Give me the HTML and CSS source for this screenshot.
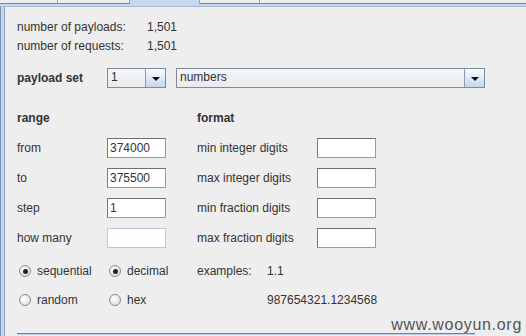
FILE: index.html
```html
<!DOCTYPE html>
<html lang="en">
<head>
    <meta charset="UTF-8">
    <title>Payloads - numbers</title>
    <link rel="stylesheet" href="styles.css">
</head>
<body>

<div class="tabs">
    <span class="tab tab-a"></span>
    <span class="tab tab-b"></span>
    <span class="tab tab-c selected"></span>
    <span class="tab tab-d"></span>
    <span class="tab tab-rest"></span>
</div>
<div class="band"></div>

<div class="panel">
    <div class="stats">
        <div class="stat"><span class="stat-label">number of payloads:</span><span>1,501</span></div>
        <div class="stat"><span class="stat-label">number of requests:</span><span>1,501</span></div>
    </div>

    <div class="payload-set">
        <span class="bold set-label">payload set</span>
        <div class="combo combo-small">
            <span class="combo-value">1</span>
            <span class="combo-btn"><span class="arrow"></span></span>
        </div>
        <div class="combo combo-wide">
            <span class="combo-value">numbers</span>
            <span class="combo-btn"><span class="arrow"></span></span>
        </div>
    </div>

    <div class="options">
        <span class="bold">range</span>
        <span></span>
        <span></span>
        <span class="bold">format</span>
        <span></span>

        <span>from</span>
        <input class="field" type="text" value="374000">
        <span></span>
        <span>min integer digits</span>
        <input class="field" type="text">

        <span>to</span>
        <input class="field" type="text" value="375500">
        <span></span>
        <span>max integer digits</span>
        <input class="field" type="text">

        <span>step</span>
        <input class="field" type="text" value="1">
        <span></span>
        <span>min fraction digits</span>
        <input class="field" type="text">

        <span>how many</span>
        <input class="field disabled" type="text" disabled>
        <span></span>
        <span>max fraction digits</span>
        <input class="field" type="text">
    </div>

    <div class="radios">
        <label class="radio"><span class="dot on"></span>sequential</label>
        <label class="radio"><span class="dot on"></span>decimal</label>
        <span>examples:</span>
        <span>1.1</span>

        <label class="radio"><span class="dot"></span>random</label>
        <label class="radio"><span class="dot"></span>hex</label>
        <span></span>
        <span>987654321.1234568</span>
    </div>

    <div class="bottom-line"></div>
</div>

<div class="watermark">www.wooyun.org</div>

</body>
</html>
```

FILE: styles.css
```css
body {
    margin: 0;
    background: #eeeeee;
    font-family: "Liberation Sans", Arial, sans-serif;
    font-size: 12px;
    color: #333;
    height: 336px;
    overflow: hidden;
    position: relative;
}

/* tab strip at the top */
.tabs {
    display: flex;
    height: 4px;
}

.tab {
    box-sizing: border-box;
    border-right: 1px solid #8ea3bf;
    border-bottom: 1px solid #6d86a8;
    background: #eeeeee;
}

.tab-a { width: 58px; }
.tab-b { width: 72px; }
.tab-c { width: 70px; }
.tab-d { width: 60px; }
.tab-rest { flex: 1; border-right: none; }

.tab.selected {
    background: #c6d9ef;
    border-bottom: none;
}

.band {
    height: 2px;
    background: #c6d9ef;
    border-bottom: 1px solid #a6b9d1;
}

.panel {
    border-left: 1px solid #7d93b3;
    box-shadow: inset 3px 0 0 #c6d8ee, inset 4px 0 0 #8ea3c2;
    padding: 11px 0 0 16px;
    height: 329px;
    box-sizing: border-box;
}

.bold {
    font-weight: bold;
}

.stat {
    height: 19px;
    line-height: 19px;
    display: flex;
}

.stat-label {
    width: 130px;
}

/* payload set row */
.payload-set {
    display: flex;
    align-items: center;
    margin-top: 12px;
    height: 20px;
}

.set-label {
    width: 90px;
}

.combo {
    display: flex;
    box-sizing: border-box;
    height: 20px;
    border: 1px solid #7b8ba3;
    background: linear-gradient(#f4f5f7, #e9ebee);
}

.combo-small { width: 59px; }
.combo-wide { width: 309px; margin-left: 10px; }

.combo-value {
    flex: 1;
    padding-left: 3px;
    line-height: 17px;
}

.combo-btn {
    width: 19px;
    border-left: 1px solid #8a9ab2;
    background: linear-gradient(#fbfcfe, #c5d6ec);
    display: flex;
    align-items: center;
    justify-content: center;
}

.arrow {
    width: 0;
    height: 0;
    border-left: 4px solid transparent;
    border-right: 4px solid transparent;
    border-top: 4px solid #111;
    margin-top: 1px;
}

/* range / format grid */
.options {
    display: grid;
    grid-template-columns: 90px 60px 30px 120px 60px;
    grid-auto-rows: 20px;
    row-gap: 10px;
    align-items: center;
    margin-top: 20px;
}

.field {
    box-sizing: border-box;
    width: 59px;
    height: 20px;
    margin: 0;
    padding: 0 2px;
    font: inherit;
    color: #333;
    background: #fff;
    border: 1px solid #9a9a9a;
    border-top-color: #6f6f6f;
    border-left-color: #7a7a7a;
    outline: none;
}

.field.disabled {
    border: 1px solid #b9c9da;
    background: #fff;
}

/* radio buttons */
.radios {
    display: grid;
    grid-template-columns: 90px 90px 70px auto;
    grid-auto-rows: 20px;
    row-gap: 9px;
    align-items: center;
    margin-top: 13px;
}

.radio {
    display: flex;
    align-items: center;
}

.dot {
    box-sizing: border-box;
    width: 12px;
    height: 12px;
    margin: 0 6px 0 2px;
    border: 1px solid #8c8c8c;
    border-radius: 50%;
    background: radial-gradient(circle at 40% 35%, #ffffff, #dde5ee 70%, #c4d1e0);
    display: flex;
    align-items: center;
    justify-content: center;
}

.dot.on::after {
    content: "";
    width: 5px;
    height: 5px;
    border-radius: 50%;
    background: #222;
}

.bottom-line {
    margin-top: 23px;
    width: 458px;
    height: 1px;
    background: #6b84a6;
    border-bottom: 1px solid #c0cfe2;
}

.watermark {
    position: absolute;
    right: 4px;
    bottom: 2px;
    font-size: 16px;
    letter-spacing: 0.7px;
    color: #555;
}
```
